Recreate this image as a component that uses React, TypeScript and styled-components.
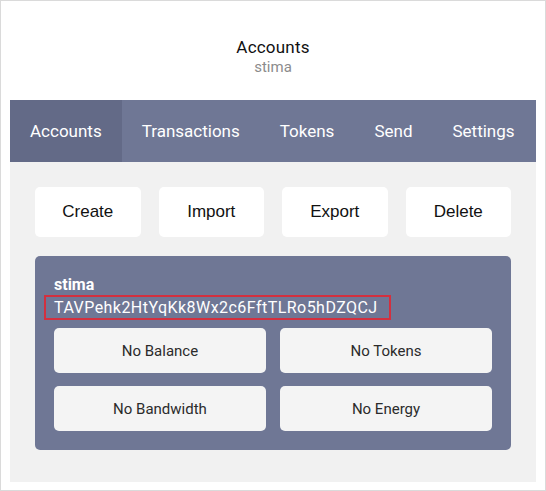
import styled, { createGlobalStyle } from 'styled-components'

const GlobalStyle = createGlobalStyle`
  html, body {
    margin: 0;
    padding: 0;
    background: #ffffff;
  }
  * {
    box-sizing: border-box;
  }
`

//#region styles
const Frame = styled.div`
  width: 546px;
  height: 491px;
  border: 1px solid #dadada;
  background: #ffffff;
  padding: 0 9px 8px;
  display: flex;
  flex-direction: column;
  font-family: Roboto, "Liberation Sans", sans-serif;
`
const Header = styled.div`
  height: 99px;
  padding-top: 36px;
  display: flex;
  flex-direction: column;
  align-items: center;
`
const Title = styled.div`
  font-size: 17px;
  line-height: 20px;
  letter-spacing: 0.2px;
  color: #111111;
`
const SubTitle = styled.div`
  font-size: 15px;
  line-height: 20px;
  color: #8c8c8c;
`
const Nav = styled.nav`
  height: 62px;
  display: flex;
  background: #6f7795;
`
const Tab = styled.div<{ $active?: boolean }>`
  height: 100%;
  padding: 0 20px;
  display: flex;
  align-items: center;
  font-size: 17px;
  color: #ffffff;
  background: ${p => (p.$active ? '#636a87' : 'transparent')};
  cursor: pointer;
`
const Content = styled.div`
  flex: auto;
  background: #f1f1f1;
  padding: 25px;
  display: flex;
  flex-direction: column;
  gap: 19px;
`
const ActionRow = styled.div`
  display: grid;
  grid-template-columns: repeat(4, 1fr);
  column-gap: 18px;
`
const ActionButton = styled.button`
  height: 50px;
  border: none;
  border-radius: 5px;
  background: #ffffff;
  font-family: "Liberation Sans", Arial, sans-serif;
  font-size: 17px;
  color: #111111;
  cursor: pointer;
`
const AccountCard = styled.div`
  background: #6f7795;
  border-radius: 5px;
  padding: 20px 19px 19px;
  color: #ffffff;
`
const AccountName = styled.div`
  font-size: 16px;
  font-weight: 700;
  line-height: 18px;
  margin-bottom: 1px;
`
const Address = styled.div`
  display: inline-block;
  height: 25px;
  margin-left: -10px;
  padding: 0 11px 0 8px;
  border: 2px solid #d3303f;
  font-size: 16px;
  letter-spacing: 0.45px;
  line-height: 21px;
`
const StatGrid = styled.div`
  margin-top: 8px;
  display: grid;
  grid-template-columns: repeat(2, 1fr);
  grid-auto-rows: 45px;
  gap: 13px 14px;
`
const StatBox = styled.div`
  display: flex;
  align-items: center;
  justify-content: center;
  background: #f4f4f4;
  border-radius: 5px;
  font-size: 15px;
  color: #2b2b2b;
`
//#endregion

const tabs = ['Accounts', 'Transactions', 'Tokens', 'Send', 'Settings']
const actions = ['Create', 'Import', 'Export', 'Delete']
const stats = ['No Balance', 'No Tokens', 'No Bandwidth', 'No Energy']

export default function App() {
  return (
    <>
      <GlobalStyle />
      <Frame>
        <Header>
          <Title>Accounts</Title>
          <SubTitle>stima</SubTitle>
        </Header>
        <Nav>
          {tabs.map(t => (
            <Tab key={t} $active={t === 'Accounts'}>{t}</Tab>
          ))}
        </Nav>
        <Content>
          <ActionRow>
            {actions.map(a => (
              <ActionButton key={a}>{a}</ActionButton>
            ))}
          </ActionRow>
          <AccountCard>
            <AccountName>stima</AccountName>
            <Address>TAVPehk2HtYqKk8Wx2c6FftTLRo5hDZQCJ</Address>
            <StatGrid>
              {stats.map(s => (
                <StatBox key={s}>{s}</StatBox>
              ))}
            </StatGrid>
          </AccountCard>
        </Content>
      </Frame>
    </>
  )
}
